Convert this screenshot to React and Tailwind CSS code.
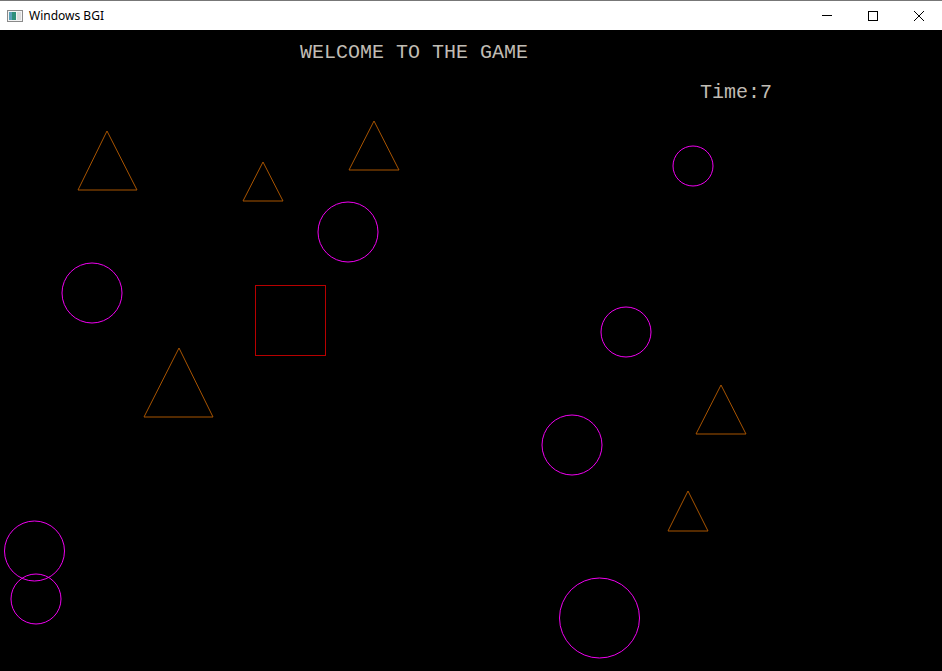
import React from "react";

const triangles = [
  [107, 131, 78, 137, 190],
  [263, 162, 243, 283, 201],
  [374, 121, 349, 399, 170],
  [179, 348, 144, 213, 417],
  [721, 385, 696, 746, 434],
  [688, 491, 668, 708, 531],
];

const circles = [
  [693, 166, 20],
  [348, 232, 30],
  [92, 293, 30],
  [626, 332, 25],
  [572, 445, 30],
  [34.5, 551, 30],
  [36, 599, 25],
  [599.5, 618, 40],
];

function AppIcon() {
  return (
    <svg width="16" height="16" viewBox="0 0 16 16">
      <rect x="0.5" y="2.5" width="15" height="11" fill="#f4f4f4" stroke="#8a8a8a" />
      <rect x="2" y="4" width="7" height="8" fill="#2f8f7a" />
      <rect x="2" y="4" width="3" height="8" fill="#5aa0b8" />
      <rect x="10" y="4" width="4" height="8" fill="#dcdcdc" />
    </svg>
  );
}

export default function App() {
  return (
    <div className="w-[942px] h-[671px] flex flex-col bg-black overflow-hidden">
      <div className="h-[30px] flex items-center bg-white border-t border-[#777777] shrink-0">
        <div className="pl-[7px] pr-[6px] flex items-center">
          <AppIcon />
        </div>
        <span className="text-[12px] text-black font-['Noto_Sans',sans-serif]">Windows BGI</span>
        <div className="ml-auto flex h-full">
          <div className="w-[46px] flex items-center justify-center">
            <div className="w-[10px] h-px bg-black" />
          </div>
          <div className="w-[46px] flex items-center justify-center">
            <div className="w-[10px] h-[10px] border border-black" />
          </div>
          <div className="w-[46px] flex items-center justify-center">
            <svg width="10" height="10" viewBox="0 0 10 10">
              <path d="M0 0 L10 10 M10 0 L0 10" stroke="#000" strokeWidth="1" />
            </svg>
          </div>
        </div>
      </div>
      <div className="relative flex-1">
        <svg className="absolute inset-0" width="942" height="641" viewBox="0 30 942 641">
          {triangles.map(([ax, ay, lx, rx, by], i) => (
            <polygon
              key={i}
              points={`${ax},${ay} ${lx},${by} ${rx},${by}`}
              fill="none"
              stroke="#a85400"
              strokeWidth="1"
            />
          ))}
          <rect x="255.5" y="285.5" width="70" height="70" fill="none" stroke="#b80000" strokeWidth="1" />
          {circles.map(([cx, cy, r], i) => (
            <circle key={i} cx={cx} cy={cy} r={r} fill="none" stroke="#f000f0" strokeWidth="1" />
          ))}
        </svg>
        <span className="absolute left-[300px] top-[13px] text-[20px] leading-[20px] text-[#c0bcb4] font-['Liberation_Mono',monospace]">
          WELCOME TO THE GAME
        </span>
        <span className="absolute left-[700px] top-[53px] text-[20px] leading-[20px] text-[#c0bcb4] font-['Liberation_Mono',monospace]">
          Time:7
        </span>
      </div>
    </div>
  );
}
